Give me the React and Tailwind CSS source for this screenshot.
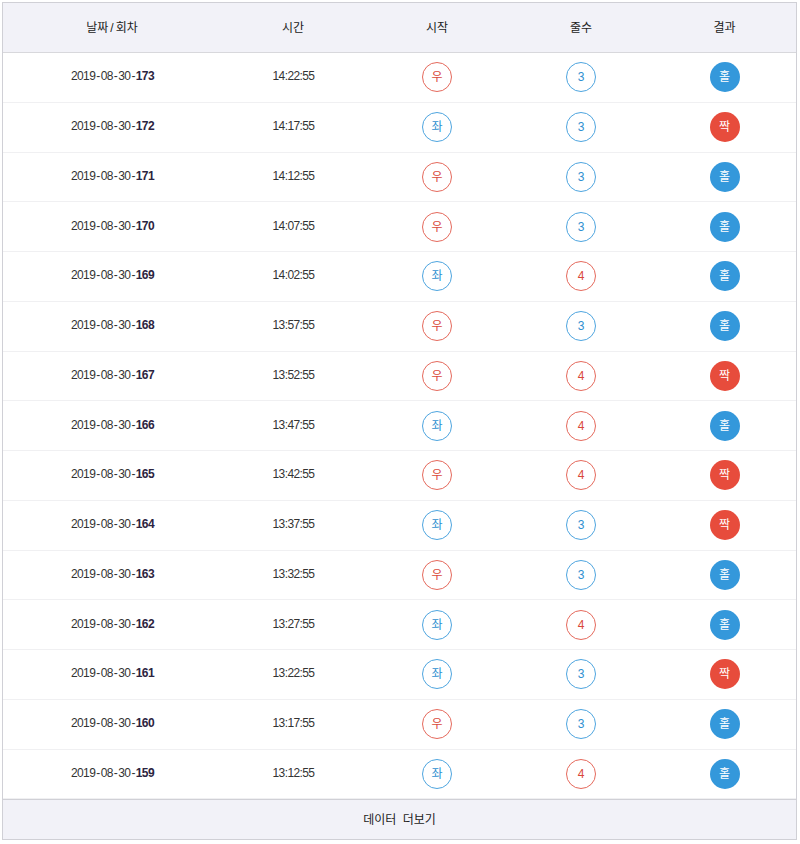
const ROWS = [
  ['173', '14:22:55', '우', 3, '홀'],
  ['172', '14:17:55', '좌', 3, '짝'],
  ['171', '14:12:55', '우', 3, '홀'],
  ['170', '14:07:55', '우', 3, '홀'],
  ['169', '14:02:55', '좌', 4, '홀'],
  ['168', '13:57:55', '우', 3, '홀'],
  ['167', '13:52:55', '우', 4, '짝'],
  ['166', '13:47:55', '좌', 4, '홀'],
  ['165', '13:42:55', '우', 4, '짝'],
  ['164', '13:37:55', '좌', 3, '짝'],
  ['163', '13:32:55', '우', 3, '홀'],
  ['162', '13:27:55', '좌', 4, '홀'],
  ['161', '13:22:55', '좌', 3, '짝'],
  ['160', '13:17:55', '우', 3, '홀'],
  ['159', '13:12:55', '좌', 4, '홀'],
];

const RED_LINE = 'border-[#e5695c] text-[#d9483a]';
const BLUE_LINE = 'border-[#4ea5df] text-[#2f8fd0]';

function Ring({ children, red }) {
  return (
    <span className={`flex h-[30px] w-[30px] items-center justify-center rounded-full border bg-white ${red ? RED_LINE : BLUE_LINE}`}>
      {children}
    </span>
  );
}

function Dot({ children, red }) {
  return (
    <span className={`flex h-[30px] w-[30px] items-center justify-center rounded-full text-white ${red ? 'bg-[#e74c3c]' : 'bg-[#3498db]'}`}>
      {children}
    </span>
  );
}

const Dash = () => <span className="mx-[1px]">-</span>;

const GRID = 'grid grid-cols-[218px_144px_144px_144px_143px] items-center justify-items-center';

export default function App() {
  return (
    <div className="min-h-[844px] bg-white pt-[2px] pl-[2px] font-['Liberation_Sans','Noto_Sans_CJK_KR',sans-serif] text-[12px] text-[#333]">
      <div className="w-[795px] border border-[#d0d0d6]">
        <div className={`${GRID} h-[50px] border-b border-[#d8d8dc] bg-[#f2f2f8] text-[#222]`}>
          <div>날짜<span className="mx-[2px]">/</span>회차</div>
          <div>시간</div>
          <div>시작</div>
          <div>줄수</div>
          <div>결과</div>
        </div>
        {ROWS.map((r) => (
          <div key={r[0]} className={`${GRID} h-[49.75px] border-b border-[#f0f0f2] last:border-b-0`}>
            <div className="pb-[2px] pl-[1px] tracking-[-0.6px]">
              2019<Dash />08<Dash />30<Dash /><b className="font-bold text-[#2c2440]">{r[0]}</b>
            </div>
            <div className="pb-[2px] pl-[1px] tracking-[-0.6px]">{r[1]}</div>
            <Ring red={r[2] === '우'}>{r[2]}</Ring>
            <Ring red={r[3] === 4}>{r[3]}</Ring>
            <Dot red={r[4] === '짝'}>{r[4]}</Dot>
          </div>
        ))}
        <div className="flex h-[40px] items-center justify-center border-t border-[#d0d0d6] bg-[#f2f2f8] text-[#222] [word-spacing:3px]">
          데이터 더보기
        </div>
      </div>
    </div>
  );
}
